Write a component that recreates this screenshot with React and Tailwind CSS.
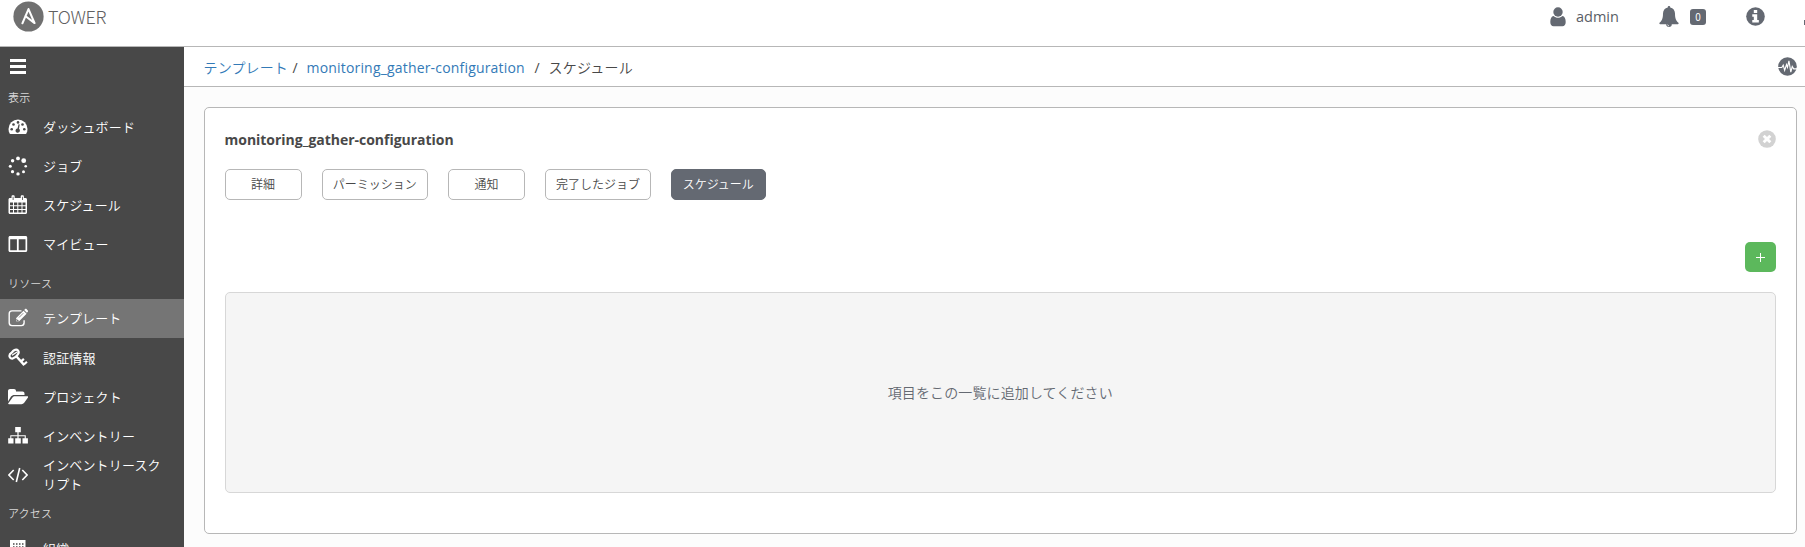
import React from "react";

const jp = "font-['Open_Sans','Noto_Sans_CJK_JP',sans-serif]";

function Icon({ children, className = "w-5 h-5", box = "0 0 20 20" }) {
  return (
    <svg viewBox={box} className={"shrink-0 " + className} fill="currentColor">
      {children}
    </svg>
  );
}

const Gauge = () => (
  <Icon>
    <path d="M.5 12a9.5 9.5 0 0 1 19 0c0 1.600-.4 3-1 4.300-.2.400-.4.700-.9.700H2.400c-.5 0-.7-.3-.9-.7C.900 15 .5 13.600.5 12z" />
    <g fill="#484848">
      <circle cx="3.700" cy="12.200" r="1.300" />
      <circle cx="5.500" cy="7.500" r="1.300" />
      <circle cx="10" cy="5.400" r="1.300" />
      <circle cx="14.500" cy="7.500" r="1.300" />
      <circle cx="16.300" cy="12.200" r="1.300" />
      <path d="M10.600 7.200l1.100.3-.7 4.300a2.200 2.200 0 1 1-1.500-.4z" />
    </g>
  </Icon>
);

const Spinner = () => (
  <Icon>
    <circle cx="10" cy="2.400" r="1.900" />
    <circle cx="15.700" cy="4.700" r="2.400" />
    <circle cx="17.700" cy="10.200" r="1.300" />
    <circle cx="15.500" cy="15.700" r="1.500" />
    <circle cx="10" cy="17.900" r="1.700" />
    <circle cx="4.500" cy="15.700" r="1.600" />
    <circle cx="2.300" cy="10.200" r="1.500" />
    <circle cx="4.600" cy="4.700" r="1.700" />
  </Icon>
);

const Calendar = () => (
  <Icon>
    <path
      fillRule="evenodd"
      d="M2 3h1.500V1.700c0-.9.500-1.400 1.300-1.400h.6c.800 0 1.300.5 1.300 1.400V3h6V1.700c0-.9.5-1.400 1.300-1.400h.6c.8 0 1.300.5 1.300 1.400V3H17.500c.9 0 1.500.6 1.500 1.500v13c0 .9-.6 1.500-1.500 1.500H2c-.9 0-1.500-.6-1.500-1.500v-13C.5 3.600 1.100 3 2 3zM2 7.500v2.700h3V7.500zm4 0v2.700h3.300V7.500zm4.300 0v2.700h3.200V7.500zm4.200 0v2.700h3V7.500zM2 11.200v2.700h3v-2.700zm4 0v2.700h3.300v-2.700zm4.300 0v2.700h3.200v-2.700zm4.200 0v2.700h3v-2.700zM2 14.900v2.600h3v-2.600zm4 0v2.600h3.300v-2.600zm4.300 0v2.600h3.200v-2.600zm4.200 0v2.600h3v-2.600z"
    />
    <path d="M4.700 1.700h.8v3.200h-.8zM14 1.700h.8v3.200H14z" fill="#484848" />
  </Icon>
);

const Columns = () => (
  <Icon>
    <path fillRule="evenodd" d="M2 2h15.700c.8 0 1.500.7 1.500 1.500v13c0 .8-.7 1.500-1.500 1.500H2c-.8 0-1.500-.7-1.500-1.500v-13C.5 2.700 1.200 2 2 2zm.2 3.300v11h6.700v-11zm8.500 0v11h6.800v-11z" />
  </Icon>
);

const Edit = () => (
  <Icon>
    <path
      d="M13.500 2.900H4A2.800 2.800 0 0 0 1.200 5.700v9.100A2.800 2.800 0 0 0 4 17.600h9.300a2.800 2.800 0 0 0 2.800-2.800v-2.600"
      fill="none"
      stroke="currentColor"
      strokeWidth="1.400"
    />
    <path d="M8 10.200L15.500 2.700l3.100 3.100-7.500 7.500H8zM16.200 2l.9-.9c.4-.4 1-.4 1.400 0l1.300 1.300c.4.400.4 1 0 1.400l-.9.900z" />
    <path d="M8.800 10.800v1.700h1.700" stroke="#757575" fill="none" />
    <path d="M11 9.500l4.300-4.300" stroke="#757575" strokeWidth=".8" />
  </Icon>
);

const KeyIcon = () => (
  <Icon>
    <path
      d="M5.800 2.500c1.500-.9 3.300-1 4.200 0s.8 2.700-.3 4.200-3.900 3.700-5.300 3.900c-1.200.1-2.700-.9-2.900-2.200-.3-1.700.8-2.900 2-3.600.8-.5 1.300-1.700 2.300-2.300z"
      fill="none"
      stroke="currentColor"
      strokeWidth="2.200"
    />
    <path d="M4 7.200l5.500-3.500" stroke="currentColor" strokeWidth="1.300" />
    <path d="M8.300 8.300l8 8.800" fill="none" stroke="currentColor" strokeWidth="2.400" />
    <path d="M13.100 13.400l2.800-2.500M15.900 16.500l3-2.700" fill="none" stroke="currentColor" strokeWidth="2.200" />
  </Icon>
);

const FolderOpen = () => (
  <Icon>
    <path d="M0 14.500V4c0-1.200.9-2 2-2h4c1.200 0 2 .8 2 2v.5h6.500c1.200 0 2 .8 2 2V8H6.300C5 8 3.800 8.600 3 9.600zM.3 16.300l4-5.600C5 9.800 6 9.300 7 9.300h12.500c.7 0 1 .5.500 1.200l-3.800 5.300c-.7.900-1.700 1.400-2.700 1.400H1c-.7 0-1-.3-.7-.9z" />
  </Icon>
);

const Sitemap = () => (
  <Icon>
    <path d="M7.200 1h5.600v5.300h-2.200v3h7.200v3h2.100v5.200h-5.400v-5.200h2.200v-2h-6.100v2h2.200v5.200H7.200v-5.200h2.200v-2H3.300v2h2.200v5.200H.2v-5.200h2.100v-3h7.100v-3H7.200z" />
  </Icon>
);

const Code = () => (
  <Icon>
    <path d="M5.700 5L.9 10l4.800 5M14.300 5l4.800 5-4.800 5M11.700 3L8.300 17" fill="none" stroke="currentColor" strokeWidth="1.600" />
  </Icon>
);

const Building = () => (
  <Icon>
    <path d="M2 1h15.500v19H2z" />
    <path
      d="M5 5h1.500M8 5h1.500M11 5h1.500M14 5h1.500M5 8h1.500M8 8h1.500M11 8h1.500M14 8h1.500M5 11h1.500M8 11h1.500M11 11h1.500M14 11h1.500"
      stroke="#484848"
      strokeWidth="1.700"
    />
  </Icon>
);

function NavItem({ icon: I, children, active }) {
  return (
    <a className={"flex h-[39.1px] shrink-0 items-center pl-2 " + (active ? "bg-[#757575]" : "")}>
      <I />
      <span className="mt-px ml-[15px] w-[125px] text-[13px] leading-[19px] font-[350] tracking-[0.15px] break-all">
        {children}
      </span>
    </a>
  );
}

function Section({ children, className = "h-[35px] pt-[12px]" }) {
  return (
    <div className={"shrink-0 pl-2 text-[11px] leading-4 font-[350] tracking-[0.15px] text-[#d8d8d8] " + className}>
      {children}
    </div>
  );
}

function Tab({ children, className, active }) {
  return (
    <button
      className={
        "flex h-[31px] items-center justify-center rounded-[5px] border pt-px text-[12px] font-[350] " +
        (active ? "border-[#646972] bg-[#646972] text-white " : "border-[#b7b7b7] bg-white text-[#484848] ") +
        className
      }
    >
      {children}
    </button>
  );
}

export default function App() {
  return (
    <div
      className={
        "flex h-[547px] w-[1805px] flex-col overflow-hidden bg-[#fcfcfc] text-[#484848] " + jp
      }
    >
      <header className="flex h-[47px] shrink-0 items-start border-b border-[#b7b7b7] bg-white">
        <svg viewBox="0 0 32 32" className="mt-[1px] ml-[13px] h-[31px] w-[31px]">
          <circle cx="16" cy="16" r="15.600" fill="#707070" />
          <path
            d="M9.700 23L16 8.300l6.300 14.500L12.700 15.500"
            fill="none"
            stroke="#fff"
            strokeWidth="2.100"
            strokeLinejoin="round"
            strokeLinecap="round"
          />
        </svg>
        <span className="mt-[4px] ml-[4px] w-[60px] font-['Noto_Sans_CJK_JP'] text-[18px] leading-6 font-light tracking-[-0.3px] text-[#606060]">
          TOWER
        </span>
        <div className="ml-auto flex h-[33px] items-center text-[#646972]">
          <Icon className="h-5 w-4" box="0 0 16 20">
            <circle cx="8" cy="5" r="4.700" />
            <path d="M3.600 8.900C4.800 10.100 6.300 10.700 8 10.700s3.200-.6 4.400-1.800c2.300.3 3.300 2.700 3.300 6.100 0 2.500-1.100 4.200-3.300 4.200H3.600C1.400 19.200.3 17.500.3 15c0-3.400 1-5.800 3.300-6.100z" />
          </Icon>
          <span className="ml-[10px] w-[43px] text-[14.500px] leading-5 text-[#5a5e66]">admin</span>
          <Icon className="ml-[40px] h-[21px] w-5" box="0 0 20 21">
            <path d="M10 0c.9 0 1.300.6 1.200 1.400C14.200 2 16 4.300 16 7.500c0 5.300 1.300 7.700 3.700 9.400 0 .8-.6 1.300-1.300 1.300h-5.600a2.800 2.800 0 0 1-5.600 0H1.600c-.7 0-1.300-.5-1.300-1.300C2.700 15.200 4 12.800 4 7.500c0-3.200 1.800-5.500 4.800-6.100C8.700.6 9.100 0 10 0z" />
            <path d="M8.600 18.500c0 .8.600 1.400 1.400 1.400" stroke="#fff" strokeWidth=".7" fill="none" />
          </Icon>
          <span className="ml-[11px] flex h-4 w-4 items-center justify-center rounded-[3px] bg-[#646972] font-['Noto_Sans_CJK_JP'] text-[10px] leading-4 text-white">
            0
          </span>
          <Icon className="mr-[39px] ml-[40px] h-[19px] w-[19px]">
            <circle cx="10" cy="10" r="9.800" />
            <path d="M8.200 3.200h3.600v3H8.200zM6.600 7.700h5.200v6h1.700v2.600H6.600v-2.600h1.600v-3.500H6.600z" fill="#fff" />
          </Icon>
          <span className="mt-[11px] h-[5px] w-[1px] bg-[#646972]" />
        </div>
      </header>

      <div className="flex h-[500px]">
        <nav className="flex w-[183.5px] shrink-0 flex-col overflow-hidden bg-[#484848] text-white">
          <div className="flex h-[34px] shrink-0 items-center pt-[5px] pl-[10px]">
            <Icon className="h-[15px] w-4" box="0 0 16 15">
              <path d="M0 0h16v3H0zM0 6h16v3H0zM0 12h16v3H0z" />
            </Icon>
          </div>
          <Section className="h-[26.500px] pt-[9px]">表示</Section>
          <NavItem icon={Gauge}>ダッシュボード</NavItem>
          <NavItem icon={Spinner}>ジョブ</NavItem>
          <NavItem icon={Calendar}>スケジュール</NavItem>
          <NavItem icon={Columns}>マイビュー</NavItem>
          <Section>リソース</Section>
          <NavItem icon={Edit} active>
            テンプレート
          </NavItem>
          <NavItem icon={KeyIcon}>認証情報</NavItem>
          <NavItem icon={FolderOpen}>プロジェクト</NavItem>
          <NavItem icon={Sitemap}>インベントリー</NavItem>
          <NavItem icon={Code}>インベントリースクリプト</NavItem>
          <Section>アクセス</Section>
          <NavItem icon={Building}>組織</NavItem>
        </nav>

        <div className="flex min-w-0 flex-1 flex-col">
          <div className="flex h-10 shrink-0 items-center border-b border-[#b7b7b7] bg-white pr-[8px] pl-5 text-[14px]">
            <a className="mt-px w-[85px] font-[350] tracking-[0.15px] text-[#337ab7]">テンプレート</a>
            <span className="mt-px ml-[4px] w-[14px]">/</span>
            <a className="mt-px w-[219px] tracking-[0.180px] text-[#337ab7]">monitoring_gather-configuration</a>
            <span className="mt-px ml-[9px] w-[14px]">/</span>
            <span className="mt-px font-[350] tracking-[0.25px]">スケジュール</span>
            <Icon className="ml-auto h-[19px] w-[19px] text-[#646972]">
              <circle cx="10" cy="10" r="9.800" />
              <path d="M0 11h4l1.500-2.500L7 14l2-6 1 3 1.500-7 2 12 1.500-6 1.500 2.500H20" fill="none" stroke="#fff" strokeWidth="1.200" />
            </Icon>
          </div>

          <main className="mt-5 mr-2 ml-5 flex h-[427px] flex-col rounded-[5px] border border-[#b7b7b7] bg-white px-5">
            <div className="mt-[21px] flex h-5 items-center justify-between">
              <h1 className="text-[14px] font-bold tracking-[-0.02px]">monitoring_gather-configuration</h1>
              <Icon className="h-[18px] w-[18px] text-[#d2d2d2]">
                <circle cx="10" cy="10" r="9.800" />
                <path d="M6.300 6.300l7.400 7.400M13.700 6.300l-7.400 7.400" stroke="#fff" strokeWidth="3.200" />
              </Icon>
            </div>
            <div className="mt-5 flex gap-5">
              <Tab className="w-[77px]">詳細</Tab>
              <Tab className="w-[106.500px]">パーミッション</Tab>
              <Tab className="w-[77px]">通知</Tab>
              <Tab className="w-[106px]">完了したジョブ</Tab>
              <Tab className="w-[94.500px]" active>
                スケジュール
              </Tab>
            </div>
            <button className="mt-[42px] flex h-[30px] w-[31px] items-center justify-center self-end rounded-[5px] bg-[#5cb85c]">
              <svg viewBox="0 0 9 9" className="h-[9px] w-[9px]">
                <path d="M4 0h1v4h4v1H5v4H4V5H0V4h4z" fill="#fff" />
              </svg>
            </button>
            <div className="mt-5 flex h-[201px] items-center justify-center rounded-[5px] border border-[#d7d7d7] bg-[#f5f5f5] text-[14px] font-[350] tracking-[0.12px] text-[#646972]">
              項目をこの一覧に追加してください
            </div>
          </main>
        </div>
      </div>
    </div>
  );
}
